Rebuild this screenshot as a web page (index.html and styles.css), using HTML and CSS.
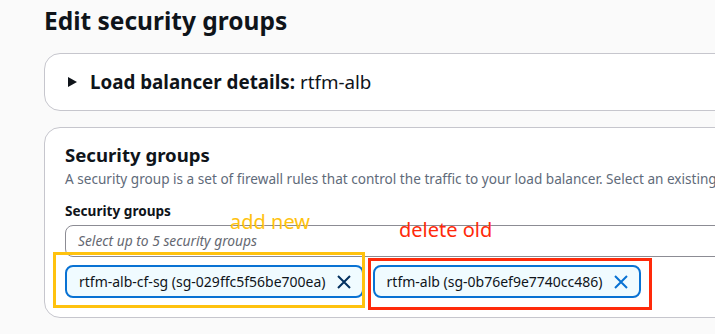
FILE: index.html
```html
<!DOCTYPE html>
<html lang="en">
<head>
  <meta charset="utf-8">
  <title>Edit security groups</title>
  <link rel="stylesheet" href="styles.css">
</head>
<body>
  <div class="page">
    <h1 class="page-title">Edit security groups</h1>

    <div class="card card-details">
      <svg class="caret" width="16" height="16" viewBox="0 0 16 16">
        <path d="M3 3 L12 8 L3 13 Z" fill="#0f141a"/>
      </svg>
      <span class="details-title"><b>Load balancer details:</b> rtfm-alb</span>
    </div>

    <div class="card card-groups">
      <h2 class="card-title">Security groups</h2>
      <p class="card-desc">A security group is a set of firewall rules that control the traffic to your load balancer. Select an existing security group, or you can create a new security group.</p>
      <div class="field-label">Security groups</div>
      <div class="select-box">Select up to 5 security groups</div>
      <div class="tokens">
        <div class="token">
          <span class="token-text">rtfm-alb-cf-sg (sg-029ffc5f56be700ea)</span>
          <svg class="token-x token-x-hover" width="16" height="16" viewBox="0 0 16 16">
            <path d="M2 2 L14 14 M14 2 L2 14" stroke-width="2" fill="none"/>
          </svg>
        </div>
        <div class="token">
          <span class="token-text">rtfm-alb (sg-0b76ef9e7740cc486)</span>
          <svg class="token-x" width="16" height="16" viewBox="0 0 16 16">
            <path d="M2 2 L14 14 M14 2 L2 14" stroke-width="2" fill="none"/>
          </svg>
        </div>
      </div>
    </div>

    <!-- annotations drawn on top of the screenshot -->
    <div class="note note-add">add new</div>
    <div class="note note-del">delete old</div>
    <div class="mark mark-add"></div>
    <div class="mark mark-del"></div>
  </div>
</body>
</html>
```

FILE: styles.css
```css
html,
body {
  margin: 0;
  padding: 0;
  background: #fafafa;
  overflow: hidden;
}

body {
  font-family: "Noto Sans", "Open Sans", sans-serif;
  color: #0f141a;
}

.page {
  position: relative;
  width: 1100px;
  padding: 6px 0 0 44px;
}

.page-title {
  margin: 0 0 17px;
  font-size: 24.5px;
  line-height: 30px;
  font-weight: 700;
}

.card {
  box-sizing: border-box;
  width: 1000px;
  background: #fff;
  border: 1px solid #c6c6cd;
  border-radius: 16px;
}

.card-details {
  display: flex;
  align-items: center;
  padding: 16px 20px;
  margin-bottom: 16px;
}

.caret {
  flex: none;
  margin-right: 9px;
}

.details-title {
  font-size: 18.8px;
  line-height: 24px;
}

.card-groups {
  padding: 15px 20px 19px;
}

.card-title {
  margin: 0 0 2px;
  font-size: 18.6px;
  line-height: 24px;
  font-weight: 700;
}

.card-desc {
  margin: 0 0 12px;
  font-size: 13.6px;
  line-height: 20px;
  color: #5f6b7a;
  white-space: nowrap;
}

.field-label {
  font-size: 13.6px;
  line-height: 20px;
  font-weight: 700;
  margin-bottom: 4px;
}

.select-box {
  box-sizing: border-box;
  height: 32px;
  padding: 5px 12px;
  border: 1px solid #8c8c94;
  border-radius: 8px;
  font-size: 13.8px;
  line-height: 20px;
  font-style: italic;
  color: #656871;
}

.tokens {
  display: flex;
  gap: 9px;
  margin-top: 8px;
}

.token {
  box-sizing: border-box;
  display: flex;
  align-items: center;
  height: 33px;
  padding: 0 10px 0 12px;
  background: #f0fbff;
  border: 2px solid #0972d3;
  border-radius: 8px;
  font-size: 14px;
}

.token-text {
  margin-right: 10px;
}

.token-x {
  stroke: #0972d3;
}

.token-x-hover {
  stroke: #033160;
}

.note {
  position: absolute;
  font-size: 20px;
  line-height: 24px;
}

.note-add {
  left: 230px;
  top: 210px;
  color: #ffc20e;
}

.note-del {
  left: 399px;
  top: 218px;
  color: #ff2a0a;
}

.mark {
  position: absolute;
  box-sizing: border-box;
  border: 3px solid;
}

.mark-add {
  left: 53px;
  top: 252px;
  width: 312px;
  height: 56px;
  border-color: #ffc20e;
}

.mark-del {
  left: 368px;
  top: 258px;
  width: 284px;
  height: 52px;
  border-color: #ff2a0a;
}
```
